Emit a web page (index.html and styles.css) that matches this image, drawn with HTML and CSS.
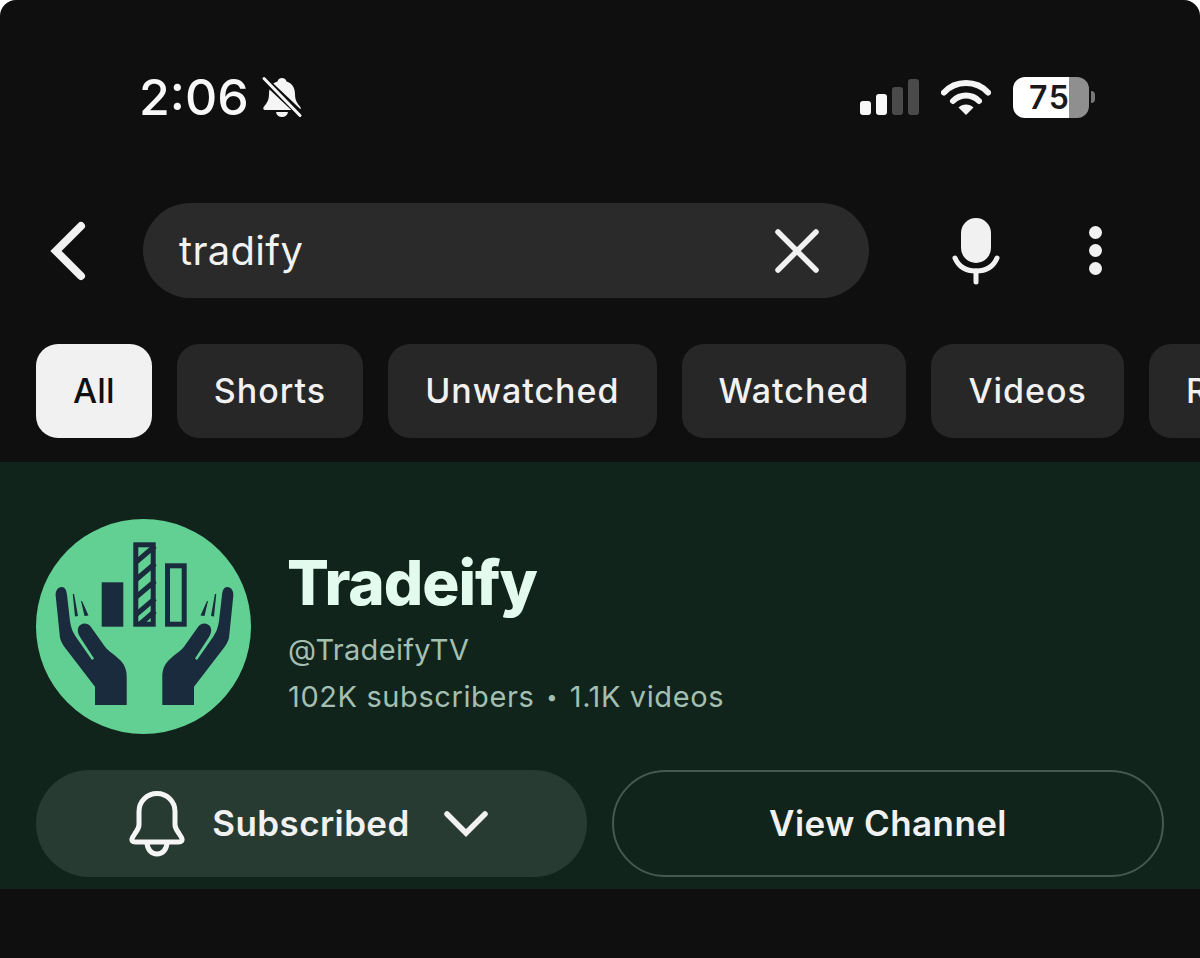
FILE: index.html
```html
<!DOCTYPE html>
<html lang="en">
<head>
    <meta charset="UTF-8">
    <meta name="viewport" content="width=device-width, initial-scale=1.0">
    <title>tradify</title>
    <link rel="stylesheet" href="styles.css">
</head>
<body>
<div class="screen">
    <div class="statusBar">
        <div class="statusLeft">
            <span class="clock">2:06</span>
            <svg class="silent" width="42" height="42" viewBox="0 0 42 42">
                <path d="M21 2c-2.500 0-4 1.500-4.500 3.500C11 7 8 12 8 18c0 6-2 9-5 12.500-1.500 2-.5 3.500 1.500 3.500h33c2 0 3-1.500 1.500-3.500C36 27 34 24 34 18c0-6-3-11-8.500-12.500C25 3.500 23.500 2 21 2z" fill="#f5f5f5"/>
                <path d="M15 36h12c-.5 3.200-3 5-6 5s-5.500-1.800-6-5z" fill="#f5f5f5"/>
                <path d="M2.500 3l37 35" stroke="#0f0f0f" stroke-width="7"/>
                <path d="M3 2.500l36 37" stroke="#f5f5f5" stroke-width="3" stroke-linecap="round"/>
            </svg>
        </div>
        <div class="statusRight">
            <div class="signal">
                <i class="on h1"></i><i class="on h2"></i><i class="h3"></i><i class="h4"></i>
            </div>
            <svg class="wifi" width="50" height="36" viewBox="0 0 50 36">
                <path d="M3 13.500C8.500 7.500 16.500 4 25 4s16.500 3.500 22 9.500" fill="none" stroke="#f5f5f5" stroke-width="6" stroke-linecap="round"/>
                <path d="M12 22c3.500-3.500 8-5.500 13-5.500s9.500 2 13 5.500" fill="none" stroke="#f5f5f5" stroke-width="6" stroke-linecap="round"/>
                <path d="M17.500 28.500c2-2 4.700-3 7.500-3s5.500 1 7.500 3L25 36z" fill="#f5f5f5"/>
            </svg>
            <div class="battery">
                <div class="batteryBody"><span>75</span></div>
                <i class="batteryTip"></i>
            </div>
        </div>
    </div>

    <div class="searchRow">
        <svg class="back" width="38" height="60" viewBox="0 0 38 60">
            <path d="M32 5L7 30l25 25" fill="none" stroke="#f1f1f1" stroke-width="8" stroke-linecap="round" stroke-linejoin="miter"/>
        </svg>
        <div class="searchBox">
            <span class="query">tradify</span>
            <svg class="clear" width="46" height="46" viewBox="0 0 46 46">
                <path d="M4 4l38 38M42 4L4 42" stroke="#f1f1f1" stroke-width="5.500" stroke-linecap="round"/>
            </svg>
        </div>
        <svg class="mic" width="50" height="68" viewBox="0 0 50 68">
            <rect x="10" y="1" width="30" height="45" rx="15" fill="#f1f1f1"/>
            <path d="M4 41c3.500 8.500 11 13 21 13s17.500-4.500 21-13" fill="none" stroke="#f1f1f1" stroke-width="5" stroke-linecap="round"/>
            <path d="M25 54v11" stroke="#f1f1f1" stroke-width="5" stroke-linecap="round"/>
        </svg>
        <div class="moreDots"><i></i><i></i><i></i></div>
    </div>

    <div class="chips">
        <div class="chip active">All</div>
        <div class="chip">Shorts</div>
        <div class="chip">Unwatched</div>
        <div class="chip">Watched</div>
        <div class="chip">Videos</div>
        <div class="chip">Recently uploaded</div>
    </div>

    <section class="channel">
        <div class="channelTop">
            <svg class="avatar" width="215" height="215" viewBox="0 0 215 215">
                <circle cx="107.500" cy="107.500" r="107.500" fill="#63d093"/>
                <rect x="65.700" y="63.300" width="21.600" height="44.400" fill="#1a2b3d"/>
                <path d="M99 44l20-17M99 61.500l20-17M99 79l20-17M99 96.500l20-17M104 105l15-13" stroke="#1a2b3d" stroke-width="5"/>
                <rect x="99.800" y="25.800" width="17.400" height="79.400" fill="none" stroke="#1a2b3d" stroke-width="5"/>
                <rect x="131.500" y="46.800" width="16.700" height="58.400" fill="none" stroke="#1a2b3d" stroke-width="5"/>
                <g id="hand" fill="#1a2b3d">
                    <path d="M25.700 68c-4 0-6.500 4-6 9L24 119c1 4 3 7 6 11l29 37.700V186h31.700v-27c.3-9-2.700-14-6.700-18-6-6-12-9-15-13.300L55 108c-4-5-10-4-12.500 0-1.500 3-.5 7 1.500 10l14 21.500-2 1.500-16-23c-4-6-5-10-6-16l-3-26c-.5-5-2-8-5.300-8z"/>
                    <path d="M36.700 75h1.400l3.900 22-3 .5zM45 82h1l6.500 14.500-4 .5z"/>
                </g>
                <use href="#hand" transform="matrix(-1 0 0 1 217 0)"/>
            </svg>
            <div class="channelInfo">
                <h1>Tradeify</h1>
                <div class="handle">@TradeifyTV</div>
                <div class="stats">102K subscribers <span class="sep">•</span> 1.1K videos</div>
            </div>
        </div>
        <div class="channelActions">
            <div class="btn subscribed">
                <svg class="bell" width="56" height="66" viewBox="0 0 56 66">
                    <path d="M28 2.500c-10 0-18 8-18 18v13c0 4-2 6-4 9l-2.500 4c-1.500 3 0 4.500 3 4.500h43c3 0 4.500-1.500 3-4.500L50 42.500c-2-3-4-5-4-9v-13c0-10-8-18-18-18z" fill="none" stroke="#f5f5f5" stroke-width="5" stroke-linejoin="round"/>
                    <path d="M18 51c0 8 5 12 10 12s10-4 10-12" fill="none" stroke="#f5f5f5" stroke-width="5"/>
                </svg>
                <span class="btnLabel">Subscribed</span>
                <svg class="chev" width="44" height="28" viewBox="0 0 44 28">
                    <path d="M3 4l19 19L41 4" fill="none" stroke="#f1f1f1" stroke-width="5.500" stroke-linecap="round"/>
                </svg>
            </div>
            <div class="btn viewChannel"><span class="btnLabel">View Channel</span></div>
        </div>
    </section>
</div>
</body>
</html>
```

FILE: styles.css
```css
* {
	box-sizing: border-box;
}

html {
	background-color: #fff;
}

body {
	margin: 0;
	font-family: Inter, "Noto Sans", sans-serif;
	color: #f1f1f1;
}

.screen {
	width: 1200px;
	height: 958px;
	overflow: hidden;
	background-color: #0f0f0f;
	border-radius: 16px 16px 0 0;
}

.statusBar {
	height: 203px;
	padding: 68px 105px 0 139px;
	display: flex;
	justify-content: space-between;
	align-items: flex-start;
}

.statusLeft {
	display: flex;
	align-items: center;
	gap: 12px;
}

.clock {
	font-size: 50px;
	line-height: 58px;
	font-weight: 500;
	color: #f8f8f8;
}

.statusRight {
	display: flex;
	align-items: center;
	gap: 22px;
	height: 58px;
}

.signal {
	display: flex;
	align-items: flex-end;
	gap: 5px;
	height: 36px;
}

.signal i {
	display: block;
	width: 11px;
	border-radius: 3px;
	background-color: #4a4a4a;
}

.signal .on {
	background-color: #f8f8f8;
}

.signal .h1 {
	height: 14px;
}

.signal .h2 {
	height: 21px;
}

.signal .h3 {
	height: 28px;
}

.signal .h4 {
	height: 36px;
}

.battery {
	display: flex;
	align-items: center;
	gap: 2px;
}

.batteryBody {
	width: 76px;
	height: 41px;
	border-radius: 12px;
	background: linear-gradient(90deg, #fff 0, #fff 56px, #8f8f8f 56px);
	color: #1a1a1a;
	font-size: 32px;
	font-weight: 600;
	line-height: 41px;
	letter-spacing: 1.5px;
	padding-left: 16px;
}

.batteryTip {
	display: block;
	width: 4px;
	height: 12px;
	border-radius: 0 6px 6px 0;
	background-color: #777;
}

.searchRow {
	height: 95px;
	padding-left: 49px;
	display: flex;
	align-items: center;
}

.searchBox {
	width: 726px;
	height: 95px;
	margin-left: 56px;
	padding: 0 49px 0 36px;
	border-radius: 48px;
	background-color: #2a2a2a;
	display: flex;
	align-items: center;
	justify-content: space-between;
}

.query {
	font-size: 40px;
	letter-spacing: .3px;
	color: #f1f1f1;
}

.mic {
	margin-left: 82px;
}

.moreDots {
	margin-left: 88px;
	display: flex;
	flex-direction: column;
	gap: 5px;
}

.moreDots i {
	display: block;
	width: 13px;
	height: 13px;
	border-radius: 50%;
	background-color: #f1f1f1;
}

.chips {
	margin-top: 46px;
	padding-left: 36px;
	display: flex;
	gap: 25px;
	height: 94px;
}

.chip {
	flex: none;
	height: 94px;
	padding: 0 37px;
	border-radius: 22px;
	background-color: #272727;
	font-size: 34px;
	font-weight: 500;
	line-height: 93px;
	letter-spacing: 1px;
}

.chip.active {
	background-color: #f1f1f1;
	color: #0f0f0f;
	letter-spacing: .2px;
}

.channel {
	margin-top: 24px;
	height: 427px;
	padding: 57px 36px 0;
	background-color: #10241c;
}

.channelTop {
	display: flex;
	align-items: flex-start;
	gap: 37px;
}

.channelInfo {
	padding-top: 26px;
}

.channelInfo h1 {
	margin: 0 0 0 -1px;
	font-size: 62px;
	line-height: 75px;
	font-weight: 800;
	color: #e3fbef;
	letter-spacing: -1px;
}

.handle,
.stats {
	font-size: 29px;
	line-height: 40px;
	color: #a3bfb1;
}

.handle {
	margin-top: 10px;
	letter-spacing: .3px;
}

.stats {
	margin-top: 7px;
	letter-spacing: .6px;
}

.sep {
	font-size: 20px;
	margin: 0 3px;
	vertical-align: 3px;
}

.channelActions {
	margin-top: 36px;
	display: grid;
	grid-template-columns: 551px 552px;
	gap: 25px;
}

.btn {
	height: 107px;
	border-radius: 54px;
	display: flex;
	align-items: center;
	justify-content: center;
	font-size: 35px;
	font-weight: 600;
	color: #f1f1f1;
	letter-spacing: .4px;
}

.btnLabel {
	margin-bottom: 2px;
}

.subscribed {
	background-color: #283b33;
	padding-right: 6px;
}

.bell {
	margin-right: 27px;
}

.chev {
	margin-left: 34px;
}

.viewChannel {
	border: 2px solid #45594f;
}
```
